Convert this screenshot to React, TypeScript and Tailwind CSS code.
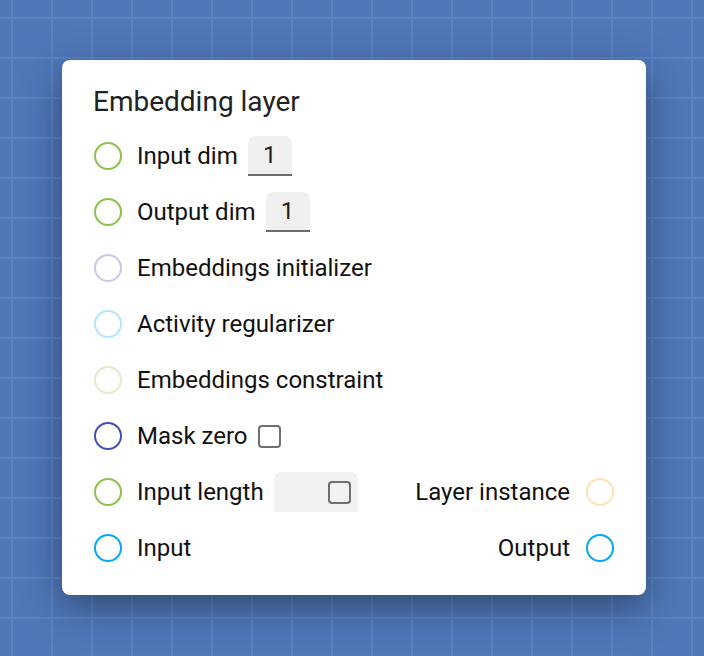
import React from "react";

function Port({ color }: { color: string }) {
  return <div className={`w-[28px] h-[28px] shrink-0 rounded-full border-2 ${color}`} />;
}

function Check() {
  return <div className="w-[23px] h-[23px] shrink-0 rounded-[4px] border-2 border-[#6f6f6f]" />;
}

function NumField() {
  return (
    <div className="w-[44px] h-[40px] rounded-t-[7px] bg-[#f0f0f0] border-b-2 border-[#6d6d6d] flex items-center justify-center text-[24px] text-[#222]">
      1
    </div>
  );
}

export default function App() {
  return (
    <div
      className="w-full h-[656px] overflow-hidden bg-[#4f78ba] [background-image:linear-gradient(to_right,#5985c5_2px,transparent_2px),linear-gradient(to_bottom,#5985c5_2px,transparent_2px)] [background-size:40px_40px] [background-position:11px_17px] pt-[60px] pl-[62px] font-['Roboto',sans-serif]"
    >
      <div className="w-[584px] h-[535px] bg-white rounded-[8px] shadow-[0_12px_40px_rgba(0,0,0,0.4)] pl-[32px] pr-[32px] pt-[26px] flex flex-col">
        <div className="text-[28px] leading-[32px] text-[#222] mb-[18px] -ml-px">Embedding layer</div>
        <div className="flex flex-col gap-[16px] text-[24px] text-[#111]">
          <div className="h-[40px] flex items-center">
            <Port color="border-[#8bc34a]" />
            <span className="ml-[15px]">Input dim</span>
            <div className="ml-[10px]"><NumField /></div>
          </div>
          <div className="h-[40px] flex items-center">
            <Port color="border-[#8bc34a]" />
            <span className="ml-[15px]">Output dim</span>
            <div className="ml-[10px]"><NumField /></div>
          </div>
          <div className="h-[40px] flex items-center">
            <Port color="border-[#c5cae9]" />
            <span className="ml-[15px]">Embeddings initializer</span>
          </div>
          <div className="h-[40px] flex items-center">
            <Port color="border-[#b3e5fc]" />
            <span className="ml-[15px]">Activity regularizer</span>
          </div>
          <div className="h-[40px] flex items-center">
            <Port color="border-[#dcedc8]" />
            <span className="ml-[15px]">Embeddings constraint</span>
          </div>
          <div className="h-[40px] flex items-center">
            <Port color="border-[#3f51b5]" />
            <span className="ml-[15px]">Mask zero</span>
            <div className="ml-[10px]"><Check /></div>
          </div>
          <div className="h-[40px] flex items-center">
            <Port color="border-[#8bc34a]" />
            <span className="ml-[15px]">Input length</span>
            <div className="ml-[10px] w-[84px] h-[40px] rounded-t-[8px] bg-[#f2f2f2] flex items-center justify-end pr-[7px]">
              <Check />
            </div>
            <div className="flex-1" />
            <span>Layer instance</span>
            <div className="ml-[16px]"><Port color="border-[#ffe0b2]" /></div>
          </div>
          <div className="h-[40px] flex items-center">
            <Port color="border-[#03a9f4]" />
            <span className="ml-[15px]">Input</span>
            <div className="flex-1" />
            <span>Output</span>
            <div className="ml-[16px]"><Port color="border-[#03a9f4]" /></div>
          </div>
        </div>
      </div>
    </div>
  );
}
